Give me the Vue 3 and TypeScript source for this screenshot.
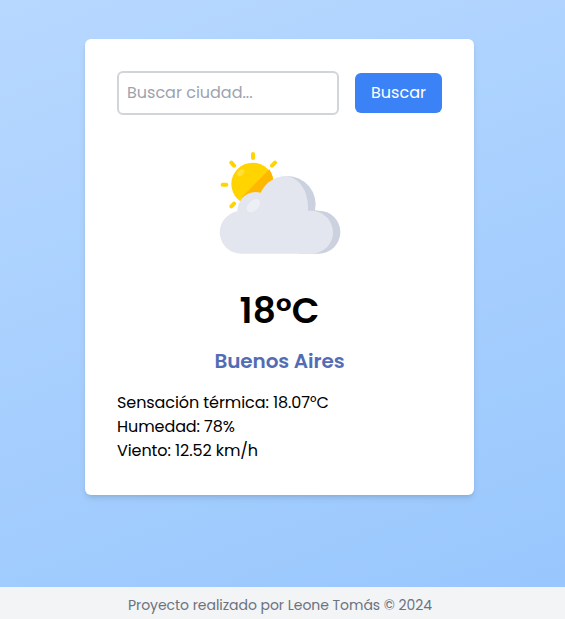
<script setup lang="ts">
import { ref } from 'vue'

interface Weather {
  city: string
  temperature: number
  feelsLike: number
  humidity: number
  wind: number
}

const query = ref('')
const weather = ref<Weather>({
  city: 'Buenos Aires',
  temperature: 18,
  feelsLike: 18.07,
  humidity: 78,
  wind: 12.52,
})
</script>

<template>
  <div class="page">
    <main class="card">
      <form class="search" @submit.prevent>
        <input v-model="query" class="field" type="text" placeholder="Buscar ciudad..." />
        <button class="submit" type="submit">Buscar</button>
      </form>
      <svg class="icon" viewBox="0 0 450 375" aria-hidden="true">
        <g stroke="#ffd400" stroke-width="12" stroke-linecap="round">
          <path d="M144 42v12M79 68l8 9M210 68l-9 9M53 134.500h11M79 199l8-8" />
        </g>
        <circle cx="143" cy="132" r="64" fill="#ffd400" />
        <path d="M193 88L112 170V188A64 64 0 0 0 205 119Q201 99 193 88Z" fill="#ffb800" />
        <ellipse cx="107" cy="98" rx="13" ry="8" transform="rotate(-42 107 98)" fill="#ffdf3a" />
        <path
          d="M246 108a85 85 0 0 1 84 103q8 0 12 1a64.500 64.500 0 0 1-1 129h-60L225 220Z"
          fill="#cbd1de"
        />
        <path
          d="M109 341a64 64 0 0 1-12-127C98 181 122 156 151 156q8 0 16 2C181 127 212 108 243 108c39 4 69 44 66 104h10c35 0 65 29 65 65s-29 64-65 64Z"
          fill="#e3e6ee"
        />
        <ellipse cx="145" cy="197" rx="24" ry="15" transform="rotate(-45 145 197)" fill="#eceff4" />
      </svg>
      <h1 class="temperature">{{ weather.temperature }}°C</h1>
      <h2 class="city">{{ weather.city }}</h2>
      <div class="details">
        <p>Sensación térmica: {{ weather.feelsLike }}°C</p>
        <p>Humedad: {{ weather.humidity }}%</p>
        <p>Viento: {{ weather.wind }} km/h</p>
      </div>
    </main>
    <footer class="footer">Proyecto realizado por Leone Tomás © 2024</footer>
  </div>
</template>

<style>
body {
  margin: 0;
}
</style>

<style scoped>
.page {
  box-sizing: border-box;
  display: flex;
  flex-direction: column;
  height: 619px;
  padding-top: 39px;
  overflow: hidden;
  background: linear-gradient(160deg, #b7d8ff, #97c6fd);
  font-family: Poppins, Inter, sans-serif;
  font-size: 16px;
  line-height: 24px;
}
.card {
  box-sizing: border-box;
  display: flex;
  flex-direction: column;
  width: 389px;
  height: 456px;
  margin-left: 85px;
  padding: 32px;
  border-radius: 6px;
  background: #fff;
  box-shadow: 0 4px 6px -1px rgb(0 0 0 / 10%), 0 2px 4px -2px rgb(0 0 0 / 10%);
}
.search {
  display: flex;
  align-items: center;
  gap: 16px;
}
.field {
  box-sizing: border-box;
  width: 222px;
  height: 44px;
  padding: 7px 8px 9px;
  border: 2px solid #d1d5db;
  border-radius: 6px;
  outline: none;
  background: #fff;
  font: inherit;
}
.field::placeholder {
  color: #9ca3af;
  opacity: 1;
}
.submit {
  width: 87px;
  height: 40px;
  padding: 0;
  border: 0;
  border-radius: 6px;
  background: #3b82f6;
  color: #fff;
  font: inherit;
}
.icon {
  width: 150px;
  height: 125px;
  margin: 25px 0 0 88px;
}
.temperature,
.city,
.details p {
  margin: 0;
}
.temperature {
  margin-top: 26px;
  font-size: 36px;
  font-weight: 600;
  line-height: 40px;
  text-align: center;
}
.city {
  margin-top: 16px;
  color: #536db5;
  font-size: 20px;
  font-weight: 600;
  line-height: 28px;
  letter-spacing: -0.1px;
  text-align: center;
}
.details {
  margin-top: 16px;
  letter-spacing: -0.08px;
}
.footer {
  box-sizing: border-box;
  height: 32px;
  margin-top: auto;
  padding: 6px 5px 0 0;
  background: #f3f4f6;
  color: #6b7280;
  font-size: 14px;
  letter-spacing: -0.04px;
  text-align: center;
}
</style>
